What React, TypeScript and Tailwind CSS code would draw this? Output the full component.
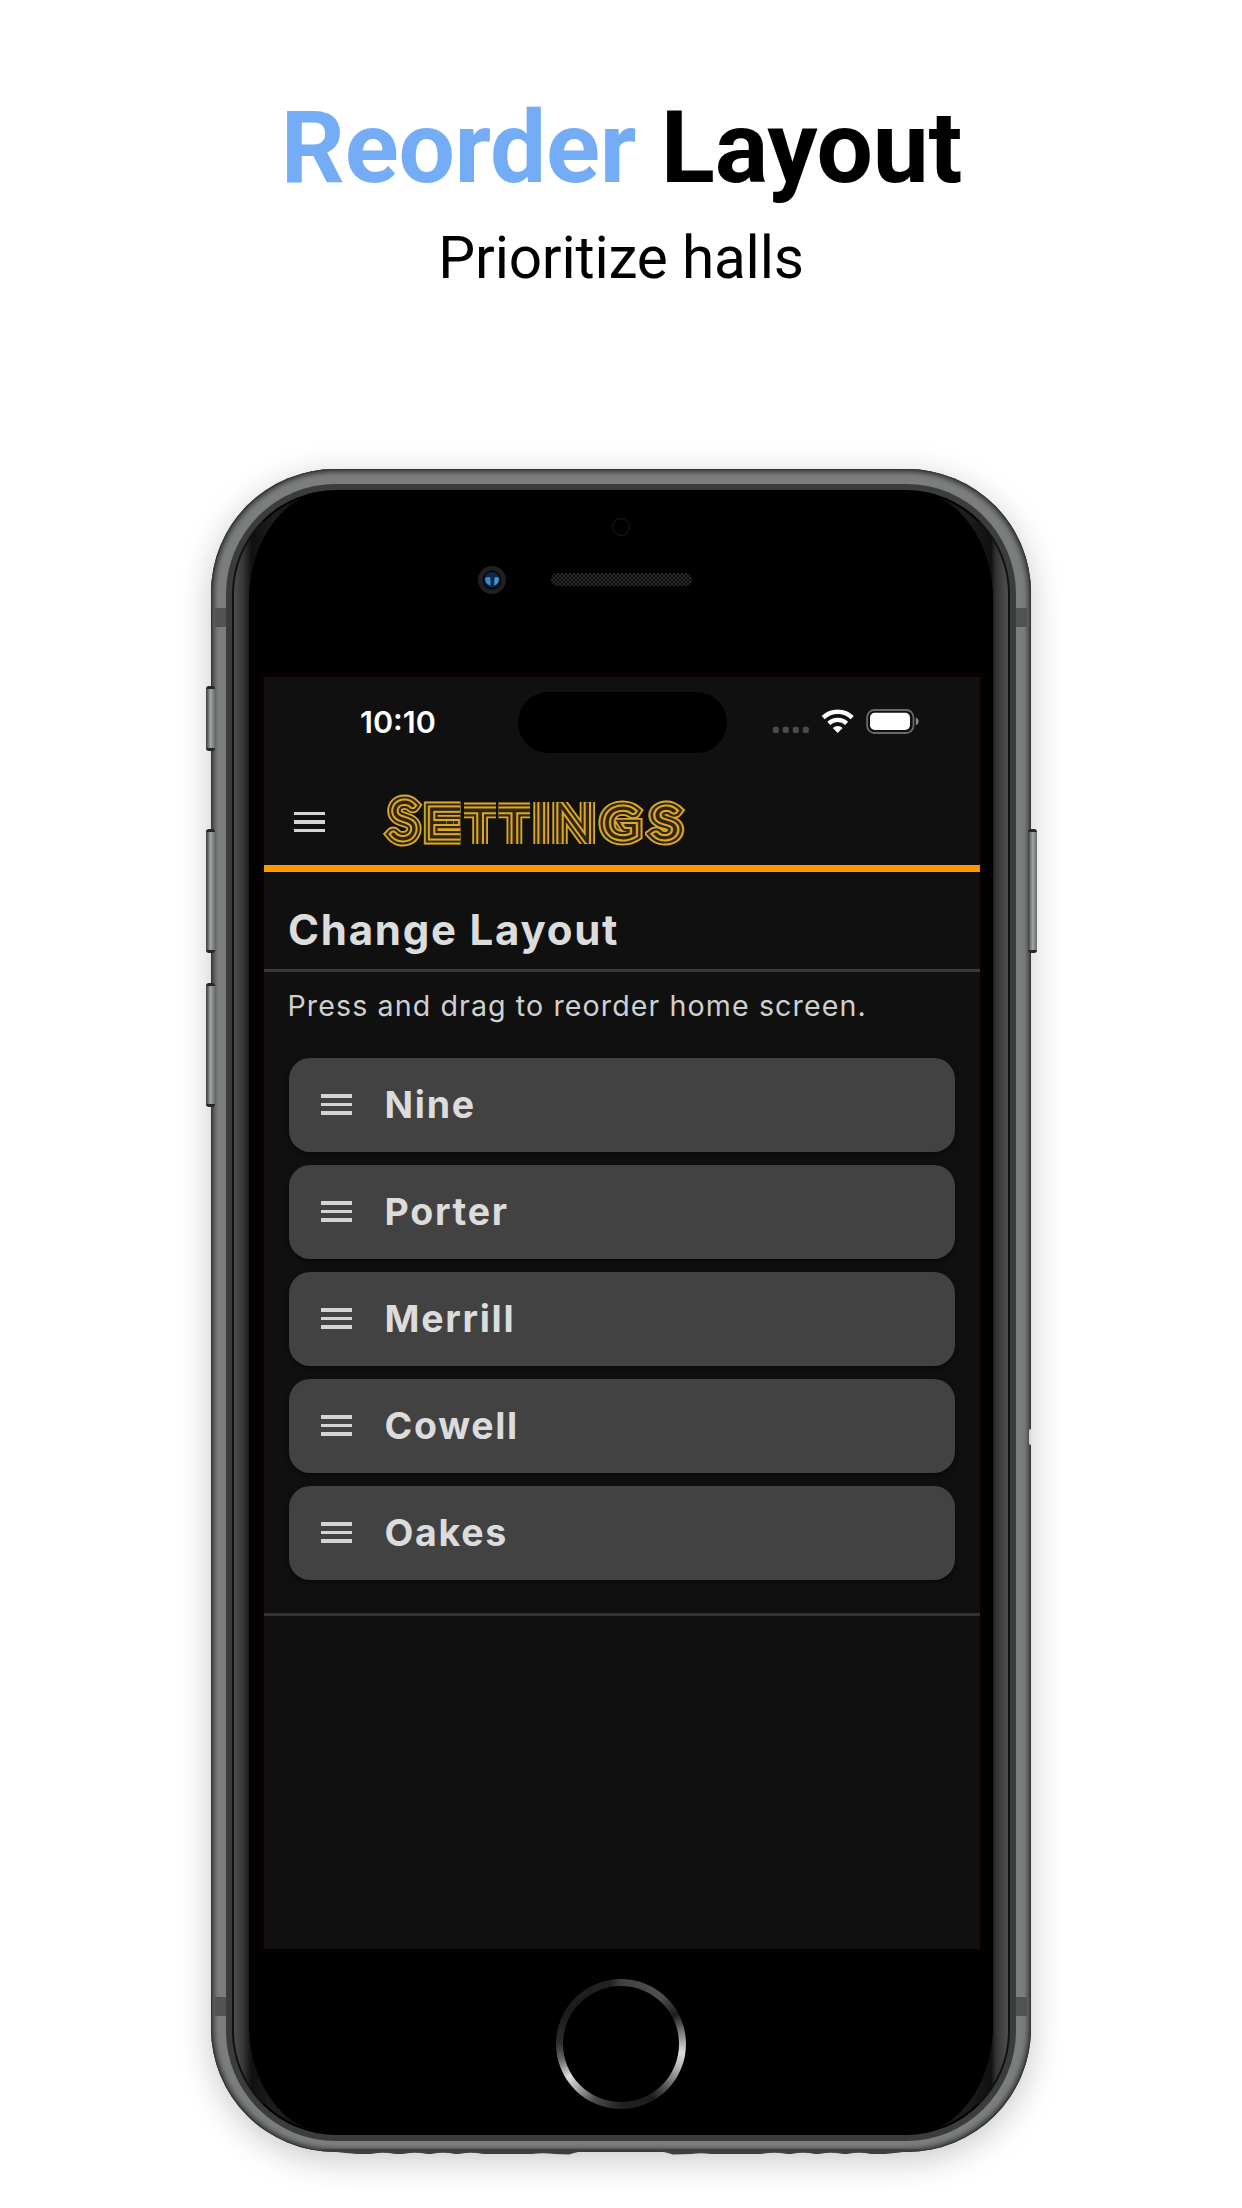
import React from "react";

const halls = ["Nine", "Porter", "Merrill", "Cowell", "Oakes"];

function MenuBars() {
  return (
    <span className="flex w-[31px] flex-col gap-[5px]">
      <span className="h-[3.4px] bg-[#d4d4d4]" />
      <span className="h-[3.4px] bg-[#d4d4d4]" />
      <span className="h-[3.4px] bg-[#d4d4d4]" />
    </span>
  );
}

const outerLine = { color: "#dba929", width: 14.8 };

const innerLines = [
  { color: "#33260f", width: 11.2 },
  { color: "#dba929", width: 6.8 },
  { color: "#33260f", width: 2.8 },
];

// Each glyph is drawn around its centre (cx, baseline) and trimmed to [left, right] so its strokes end open.
// A glyph with "of" extends the arms of the glyph it names.
const titleGlyphs = [
  { id: "s1", ch: "S", cx: 402.7, y: 838.5, size: 52, sx: 1, left: 380, right: 424 },
  { id: "e", ch: "E", cx: 437, y: 837, size: 39, sx: 1, left: 422, right: 446 },
  { id: "e2", of: "e", cx: 444, y: 837, size: 39, sx: 1, left: 446, right: 453 },
  { id: "e3", of: "e", cx: 448.5, y: 837, size: 39, sx: 1, left: 453, right: 459.5 },
  { id: "t1", ch: "T", cx: 479, y: 862, size: 74, sx: 1, left: 463, right: 495, trim: true },
  { id: "t2", ch: "T", cx: 513.2, y: 862, size: 74, sx: 1, left: 497.5, right: 529, trim: true },
  { id: "i", ch: "I", cx: 540.2, y: 852, size: 80, sx: 1, left: 531, right: 550, trim: true },
  { id: "n", ch: "N", cx: 572.7, y: 842.4, size: 54, sx: 1, left: 550, right: 595, trim: true },
  { id: "g", ch: "G", cx: 619.5, y: 837.5, size: 41, sx: 1.12, left: 595, right: 645 },
  { id: "s2", ch: "S", cx: 664.5, y: 837.5, size: 41, sx: 1.18, left: 644, right: 688 },
];

function NeonTitle() {
  return (
    <svg width="310" height="64" viewBox="380 788 310 64" role="heading" aria-label="Settings">
      {titleGlyphs.map((g) => (
        <g key={g.id}>
          <clipPath id={`clip-${g.id}`}>
            <rect x={g.left} y={g.trim ? 802 : 788} width={g.right - g.left} height={g.trim ? 42 : 64} />
          </clipPath>
          <g clipPath={`url(#clip-${g.id})`}>
            <g transform={`translate(${g.cx} ${g.y}) scale(${g.sx} 1)`} strokeLinejoin="miter" strokeMiterlimit="3">
              <g fill={outerLine.color} stroke={outerLine.color} strokeWidth={outerLine.width}>
                {g.of ? (
                  <use href={`#glyph-${g.of}`} />
                ) : (
                  <text id={`glyph-${g.id}`} fontFamily="Lato, sans-serif" fontWeight="100" fontSize={g.size} textAnchor="middle">
                    {g.ch}
                  </text>
                )}
              </g>
              {innerLines.map((l) => (
                <use key={l.width} href={`#glyph-${g.of ?? g.id}`} fill={l.color} stroke={l.color} strokeWidth={l.width} />
              ))}
            </g>
          </g>
        </g>
      ))}
    </svg>
  );
}

function StatusIcons() {
  return (
    <svg width="150" height="30" viewBox="770 706 150 30">
      {[773, 783, 793, 803].map((x) => (
        <rect key={x} x={x - 0.2} y="726.8" width="6" height="6.2" rx="1.6" fill="#4b4b4b" />
      ))}
      <g fill="none" stroke="#fff" strokeWidth="4.4">
        <path d="M823.2 717.6 A 21 21 0 0 1 852.2 717.6" />
        <path d="M828.8 723.4 A 13 13 0 0 1 846.6 723.4" />
      </g>
      <path d="M837.7 733 L832.8 728 A 7 7 0 0 1 842.6 728 Z" fill="#fff" />
      <rect x="867.1" y="710" width="46.4" height="23" rx="7.5" fill="none" stroke="#6d6868" strokeWidth="1.8" />
      <rect x="870" y="712.8" width="40" height="17.2" rx="4.8" fill="#fff" />
      <path d="M915.8 717.6 C 919.6 719 919.6 724 915.8 725.4 Z" fill="#8a8a8a" />
    </svg>
  );
}

function SideButton({ className }: { className: string }) {
  return (
    <div
      className={`absolute w-[9px] rounded-[3px] border-y-[3px] border-[#252726] bg-linear-to-r from-[#3b3d3c] via-[#a2a5a3] to-[#6b6e6c] ${className}`}
    />
  );
}

function Screen() {
  return (
    <div className="ml-[2px] flex h-[1272px] w-[716px] shrink-0 flex-col bg-[#101010] outline-[4px] outline-[#0a0000]">
      <div className="relative flex h-[87px] shrink-0 items-start justify-between pl-[96px] pr-[60px]">
        <span className="mt-[27px] font-[Inter] text-[30.5px] font-semibold leading-[36px] text-white">10:10</span>
        <div className="absolute left-[253.5px] top-[15px] h-[61px] w-[209px] rounded-full bg-black" />
        <div className="mt-[29px]">
          <StatusIcons />
        </div>
      </div>
      <div className="flex h-[108px] shrink-0 items-center border-b-[7px] border-[#ff9800] pl-[30px]">
        <div className="pt-[15px]">
          <MenuBars />
        </div>
        <div className="ml-[56px] mt-[10px]">
          <NeonTitle />
        </div>
      </div>
      <div className="flex h-[100px] shrink-0 items-center border-b-[3.5px] border-[#393939] pl-[24px] pt-[19px]">
        <h2 className="whitespace-nowrap font-[Inter] text-[42px] font-bold leading-[52px] tracking-[1.75px] text-[#dcdcdc]">Change Layout</h2>
      </div>
      <p className="mt-[16px] whitespace-nowrap pl-[23.5px] font-[Inter] text-[28.6px] leading-[36px] tracking-[1.1px] text-[#cfcfcf]">
        Press and drag to reorder home screen.
      </p>
      <ul className="mx-[25px] mt-[33.5px] flex flex-col gap-[13px]">
        {halls.map((hall) => (
          <li
            key={hall}
            className="flex h-[94px] items-center gap-[33px] rounded-[21px] bg-[#424242] pl-[31.5px] shadow-[0_2px_5px_rgba(0,0,0,0.55)]"
          >
            <MenuBars />
            <span className="font-[Inter] text-[37.5px] font-bold leading-[46px] tracking-[1.7px] text-[#dcdcdc]">{hall}</span>
          </li>
        ))}
      </ul>
      <div className="mt-[33px] h-[3.5px] shrink-0 bg-[#333333]" />
    </div>
  );
}

export default function App() {
  return (
    <main className="flex h-[2208px] w-[1242px] flex-col items-center overflow-hidden bg-white">
      <h1 className="mt-[88px] whitespace-nowrap pl-px font-[Roboto] text-[100px] font-bold leading-[120px] tracking-[-0.25px] text-black">
        <span className="text-[#74acf5]">Reorder</span> Layout
      </h1>
      <p className="mt-[13px] whitespace-nowrap font-[Roboto] text-[58.5px] leading-[74px] tracking-[-0.2px] text-black">Prioritize halls</p>

      <div className="relative mt-[174px] h-[1683px] w-[820px] shrink-0">
        <SideButton className="left-[-5px] top-[217px] h-[65px]" />
        <SideButton className="left-[-5px] top-[360px] h-[124px]" />
        <SideButton className="left-[-5px] top-[514px] h-[124px]" />
        <SideButton className="right-[-6px] top-[360px] h-[124px]" />
        <div className="h-full rounded-[124px] bg-[#7b7e7c] px-[15px] pb-[11px] pt-[15px] shadow-[0_8px_34px_rgba(0,0,0,0.22),inset_0_0_5px_3px_#343735,inset_0_0_0_1px_#333]">
          <div className="h-full rounded-[110px] bg-[#3a3d3b] p-[6px]">
            <div className="h-full overflow-hidden rounded-[104px] border-2 border-[#101111] border-y-black bg-[linear-gradient(90deg,#4c4c4c_0px,#3a3a3a_8px,#101010_18px,#1e1e1e_40px,#000_110px,#000_670px,#1e1e1e_730px,#101010_757px,#333_762px,#505050_774px)] px-[15px]">
              <div className="flex h-full flex-col items-center rounded-[80px/108px] bg-black">
                <div className="relative h-[185px] w-full shrink-0">
                  <div className="absolute left-[363px] top-[26px] size-[18px] rounded-full border border-[#1c1c1c]" />
                  <div className="absolute left-[229px] top-[74px] flex size-[28px] items-center justify-center rounded-full bg-[#1f2020]">
                    <svg width="20" height="20" viewBox="0 0 20 20">
                      <circle cx="10" cy="10" r="9.5" fill="#050608" />
                      <circle cx="10" cy="9.7" r="7.8" fill="#122747" />
                      <path d="M3 8 Q7 6 8.5 8 L8.5 15.5 Q3 14 3 8Z" fill="#2f8fd0" />
                      <path d="M17 8 Q14 6 12.5 8 L12 15.5 Q17 14 17 8Z" fill="#3b97d6" />
                    </svg>
                  </div>
                  <div className="absolute left-[301.5px] top-[81px] h-[13px] w-[141px] rounded-full bg-[#161616] bg-[repeating-conic-gradient(#2b2b2b_0_25%,#0c0c0c_0_50%)] bg-size-[4px_4px]" />
                </div>
                <Screen />
                <div className="mt-[30px] flex size-[130px] shrink-0 items-center justify-center rounded-full bg-[conic-gradient(#3f4140_0deg,#505251_40deg,#1c1d1d_62deg,#777_78deg,#dcdedd_98deg,#b5b7b6_112deg,#444_138deg,#1b1c1c_150deg,#222_180deg,#484a49_205deg,#aaa_225deg,#e0e0e0_238deg,#666_256deg,#2d2e2e_270deg,#1a1b1c_300deg,#222_350deg,#3f4140_360deg)]">
                  <div className="size-[116px] rounded-full bg-black" />
                </div>
              </div>
            </div>
          </div>
        </div>
        <svg className="absolute left-[110px] top-[1680px]" width="600" height="8" viewBox="0 6 600 8">
          <path
            d="M-5 5 L8 8 Q22 10 36 11 L50 11 Q62 8.5 74 11 L82 11 Q94 8.5 106 11 L110 11 Q122 8.5 134 11 L138 11 Q150 8.5 162 11 L210 11 Q222 9.5 234 11 L248 11.5 Q255 9 262 8 L338 8 Q345 9 352 11.5 L370 11 Q380 9.5 390 11 L440 11 Q454 8.5 466 11 L470 11 Q482 8.5 494 11 L498 11 Q510 8.5 522 11 L526 11 Q538 8.5 550 11 L564 11 Q576 10 590 8 L605 5 Z"
            fill="#3c3f3d"
          />
        </svg>
        <div className="absolute left-[4px] top-[139px] h-[19px] w-[11px] bg-[#505351]" />
        <div className="absolute right-[4px] top-[139px] h-[19px] w-[11px] bg-[#505351]" />
        <div className="absolute left-[4px] top-[1528px] h-[19px] w-[11px] bg-[#505351]" />
        <div className="absolute right-[4px] top-[1528px] h-[19px] w-[11px] bg-[#505351]" />
        <div className="absolute right-0 top-[960px] h-[16px] w-[2px] rounded-l-full bg-[#d8d8d8]" />
      </div>
    </main>
  );
}
